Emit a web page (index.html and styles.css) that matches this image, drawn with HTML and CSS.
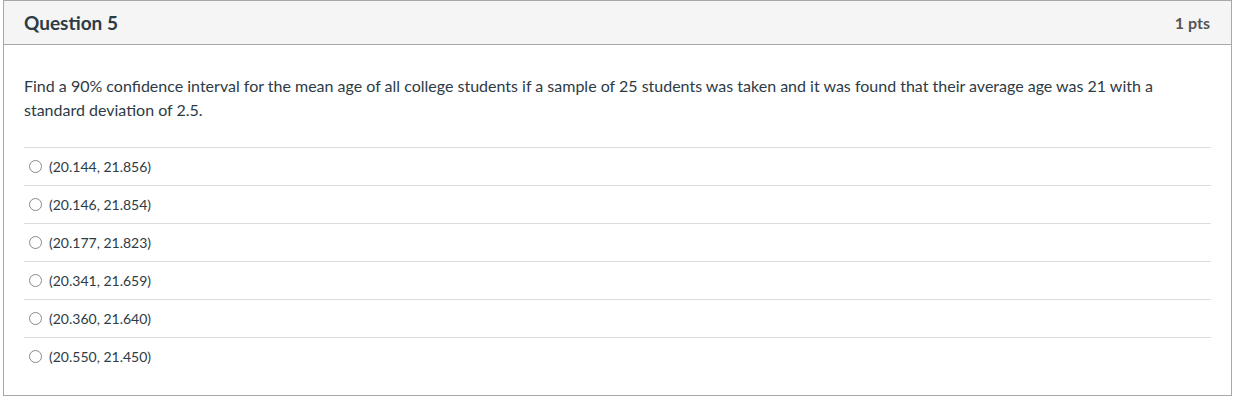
FILE: index.html
```html
<!DOCTYPE html>
<html>
<head>
<meta charset="utf-8">
<link rel="stylesheet" href="styles.css">
</head>
<body>
<div class="page">
  <div class="question">
    <div class="header">
      <span class="title">Question 5</span>
      <span class="points">1 pts</span>
    </div>
    <div class="content">
      <p class="text">Find a 90% confidence interval for the mean age of all college students if a sample of 25 students was taken and it was found that their average age was 21 with a standard deviation of 2.5.</p>
      <div class="answers">
        <label class="answer"><span class="radio"></span><span class="label">(20.144, 21.856)</span></label>
        <label class="answer"><span class="radio"></span><span class="label">(20.146, 21.854)</span></label>
        <label class="answer"><span class="radio"></span><span class="label">(20.177, 21.823)</span></label>
        <label class="answer"><span class="radio"></span><span class="label">(20.341, 21.659)</span></label>
        <label class="answer"><span class="radio"></span><span class="label">(20.360, 21.640)</span></label>
        <label class="answer"><span class="radio"></span><span class="label">(20.550, 21.450)</span></label>
      </div>
    </div>
  </div>
</div>
</body>
</html>
```
FILE: styles.css
```css
html, body {
  margin: 0;
  padding: 0;
  background: #ffffff;
}
body {
  font-family: Lato, "Liberation Sans", sans-serif;
  color: #2d3b45;
}
.page {
  padding-left: 3px;
  width: 1229px;
}
.question {
  border: 1px solid #a8a8a8;
  background: #ffffff;
}
.header {
  display: flex;
  justify-content: space-between;
  align-items: center;
  height: 43px;
  padding: 0 21px 0 20px;
  background: #f5f5f5;
  border-bottom: 1px solid #a8a8a8;
}
.title {
  font-size: 19px;
  font-weight: 700;
  color: #2d3b45;
}
.points {
  font-size: 16px;
  font-weight: 700;
  color: #555555;
}
.content {
  padding: 29px 20px 20px 20px;
}
.text {
  margin: 0 0 25px 0;
  font-size: 16px;
  line-height: 24px;
}
.answers {
  display: flex;
  flex-direction: column;
}
.answer {
  display: flex;
  align-items: center;
  height: 37px;
  border-top: 1px solid #dcdcdc;
  padding-left: 5px;
  font-size: 14px;
}
.radio {
  width: 11px;
  height: 11px;
  border: 1px solid #8a8a8a;
  border-radius: 50%;
  margin-right: 7px;
  flex: none;
}
.label {
  color: #2d3b45;
}
```
